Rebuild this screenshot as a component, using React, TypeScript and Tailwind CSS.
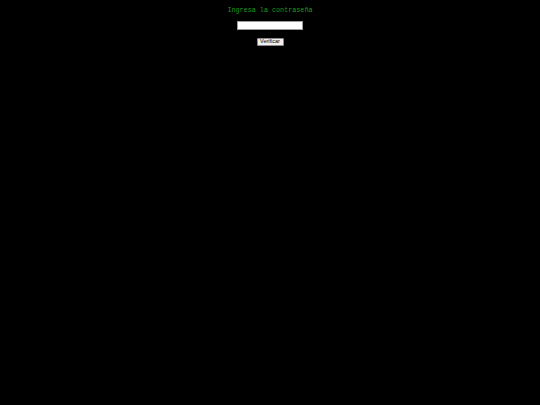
import React from 'react'

export default function App() {
  return (
    <div className="min-h-screen w-full bg-black flex flex-col items-center pt-[6px]">
      <p className="text-[6.75px] leading-[8px] text-[#1f9a1f] font-['Liberation_Mono',monospace]">
        Ingresa la contraseña
      </p>
      <input
        type="password"
        className="mt-[7px] w-[66px] h-[9px] bg-white border border-[#9a9a9a] outline-none"
      />
      <button className="mt-[8px] w-[27px] h-[8px] bg-[#efefef] border border-[#8a8a8a] rounded-[1px] text-[5.5px] leading-none text-black font-['Liberation_Sans',sans-serif]">
        Verificar
      </button>
    </div>
  )
}
